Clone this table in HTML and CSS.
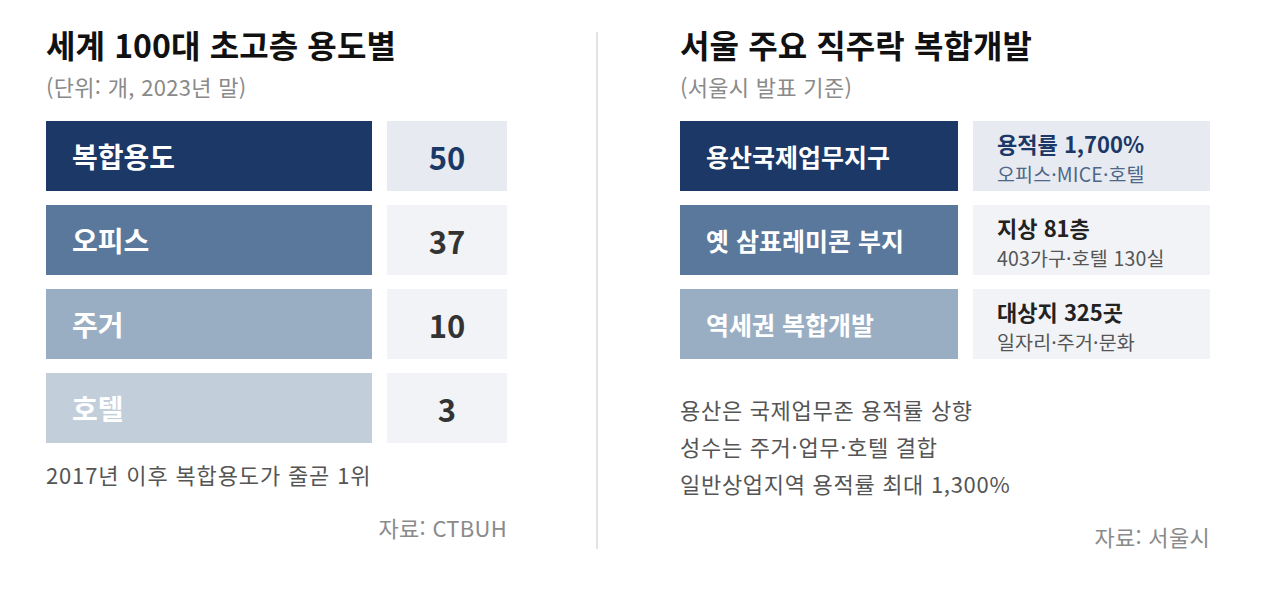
FILE: index.html
```html
<!DOCTYPE html>
<html lang="ko">
<head>
<meta charset="utf-8">
<link rel="stylesheet" href="styles.css">
</head>
<body>
<div class="page">
  <section class="panel panel-left">
    <h1 class="title">세계 100대 초고층 용도별</h1>
    <p class="subtitle">(단위: 개, 2023년 말)</p>
    <div class="rows">
      <div class="row">
        <div class="label c1">복합용도</div>
        <div class="value v1 navy">50</div>
      </div>
      <div class="row">
        <div class="label c2">오피스</div>
        <div class="value">37</div>
      </div>
      <div class="row">
        <div class="label c3">주거</div>
        <div class="value">10</div>
      </div>
      <div class="row">
        <div class="label c4">호텔</div>
        <div class="value">3</div>
      </div>
    </div>
    <p class="note">2017년 이후 복합용도가 줄곧 1위</p>
    <p class="source src-left">자료: CTBUH</p>
  </section>
  <div class="divider"></div>
  <section class="panel panel-right">
    <h1 class="title">서울 주요 직주락 복합개발</h1>
    <p class="subtitle">(서울시 발표 기준)</p>
    <div class="rows">
      <div class="row">
        <div class="label wide c1">용산국제업무지구</div>
        <div class="detail v1">
          <span class="d-main navy">용적률 1,700%</span>
          <span class="d-sub slate">오피스·MICE·호텔</span>
        </div>
      </div>
      <div class="row">
        <div class="label wide c2">옛 삼표레미콘 부지</div>
        <div class="detail">
          <span class="d-main">지상 81층</span>
          <span class="d-sub">403가구·호텔 130실</span>
        </div>
      </div>
      <div class="row">
        <div class="label wide c3">역세권 복합개발</div>
        <div class="detail">
          <span class="d-main">대상지 325곳</span>
          <span class="d-sub">일자리·주거·문화</span>
        </div>
      </div>
    </div>
    <ul class="bullets">
      <li>용산은 국제업무존 용적률 상향</li>
      <li>성수는 주거·업무·호텔 결합</li>
      <li>일반상업지역 용적률 최대 1,300%</li>
    </ul>
    <p class="source src-right">자료: 서울시</p>
  </section>
</div>
</body>
</html>
```

FILE: styles.css
```css
* { box-sizing: border-box; }
html, body {
  margin: 0;
  padding: 0;
  background: #ffffff;
}
body {
  font-family: "Noto Sans CJK KR", "Noto Sans", "Liberation Sans", sans-serif;
  color: #222;
}
.page {
  display: flex;
  align-items: flex-start;
  width: 1280px;
  height: 605px;
}
.panel {
  display: flex;
  flex-direction: column;
}
.panel-left {
  margin-left: 46px;
  width: 461px;
}
.panel-right {
  width: 530px;
}
.divider {
  width: 2px;
  height: 517px;
  margin-top: 32px;
  margin-left: 89px;
  margin-right: 82px;
  background: #e3e3e3;
}
.title {
  margin: 24px 0 0 0;
  font-size: 32px;
  line-height: 40px;
  font-weight: 700;
  color: #111;
  letter-spacing: 0.1px;
  white-space: nowrap;
}
.subtitle {
  margin: 9px 0 0 0;
  font-size: 22px;
  line-height: 26px;
  letter-spacing: 0.3px;
  color: #8a8a8a;
}
.rows {
  display: flex;
  flex-direction: column;
  gap: 14px;
  margin-top: 22px;
}
.row {
  display: flex;
  gap: 15px;
  height: 70px;
}
.label {
  width: 326px;
  display: flex;
  align-items: center;
  padding-left: 26px;
  font-size: 28px;
  font-weight: 700;
  color: #fff;
  white-space: nowrap;
}
.label.wide {
  width: 278px;
  font-size: 25px;
}
.c1 { background: #1c3867; }
.c2 { background: #5a789b; }
.c3 { background: #9aaec3; }
.c4 { background: #c3cedb; }
.value {
  width: 120px;
  display: flex;
  align-items: center;
  justify-content: center;
  background: #f2f3f6;
  font-size: 31px;
  font-weight: 700;
  color: #333;
}
.v1 { background: #e7ebf1; }
.navy { color: #1c3867; }
.detail {
  width: 237px;
  display: flex;
  flex-direction: column;
  justify-content: center;
  gap: 0;
  padding: 6px 0 0 24px;
  background: #f2f3f6;
  white-space: nowrap;
}
.detail.v1 { background: #e7ebf1; }
.d-main {
  font-size: 22px;
  line-height: 30px;
  font-weight: 700;
  color: #222;
}
.d-main.navy { color: #1c3867; }
.d-sub {
  font-size: 19.5px;
  line-height: 32px;
  letter-spacing: 0.15px;
  color: #555;
}
.d-sub.slate { color: #4e6688; }
.note {
  margin: 18px 0 0 0;
  font-size: 22px;
  line-height: 26px;
  letter-spacing: 0.85px;
  color: #555;
  white-space: nowrap;
}
.source {
  margin: 0;
  font-size: 22px;
  line-height: 26px;
  letter-spacing: 0.3px;
  color: #8a8a8a;
  text-align: right;
}
.src-left { margin-top: 27px; }
.src-right { margin-top: 21px; }
.bullets {
  list-style: none;
  margin: 32px 0 0 0;
  padding: 0;
  font-size: 22px;
  line-height: 37px;
  letter-spacing: 0.7px;
  color: #555;
  white-space: nowrap;
}
```
